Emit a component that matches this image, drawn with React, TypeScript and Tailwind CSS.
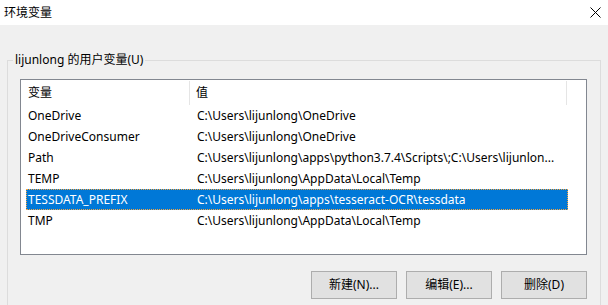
import React from 'react';

type EnvVar = { name: string; value: string };

const vars: EnvVar[] = [
  { name: 'OneDrive', value: 'C:\\Users\\lijunlong\\OneDrive' },
  { name: 'OneDriveConsumer', value: 'C:\\Users\\lijunlong\\OneDrive' },
  { name: 'Path', value: 'C:\\Users\\lijunlong\\apps\\python3.7.4\\Scripts\\;C:\\Users\\lijunlon...' },
  { name: 'TEMP', value: 'C:\\Users\\lijunlong\\AppData\\Local\\Temp' },
  { name: 'TESSDATA_PREFIX', value: 'C:\\Users\\lijunlong\\apps\\tesseract-OCR\\tessdata' },
  { name: 'TMP', value: 'C:\\Users\\lijunlong\\AppData\\Local\\Temp' },
];

const selected = 'TESSDATA_PREFIX';

function CloseIcon() {
  return (
    <svg width="11" height="11" viewBox="0 0 11 11" className="block">
      <path d="M0.5 0.5 L10.5 10.5 M10.5 0.5 L0.5 10.5" stroke="#000" strokeWidth="1" fill="none" />
    </svg>
  );
}

function WinButton({ label }: { label: string }) {
  return (
    <button
      type="button"
      className="w-[86px] h-[28px] border border-[#adadad] bg-[#e1e1e1] flex items-center justify-center text-black"
    >
      {label}
    </button>
  );
}

export default function App() {
  return (
    <div className="w-[608px] h-[305px] overflow-hidden flex flex-col bg-[#f0f0f0] text-[12px] text-black font-['Noto_Sans','Noto_Sans_CJK_SC',sans-serif]">
      {/* title bar */}
      <div className="h-[25px] bg-white flex items-center justify-between pl-[4px] pr-[7px] shrink-0">
        <span className="leading-[16px]">环境变量</span>
        <CloseIcon />
      </div>

      <div className="flex-1 px-[7px] pt-[27px]">
        <fieldset className="border border-[#dcdcdc] h-[300px] p-0 m-0 min-w-0">
          <legend className="ml-[5px] px-[2px] leading-[16px]">lijunlong 的用户变量(U)</legend>

          {/* list view */}
          <div className="ml-[12px] mt-[11px] w-[567px] h-[176px] border border-[#828790] bg-white">
            <div className="h-[25px] flex">
              <div className="w-[168px] pl-[7px] flex items-center">变量</div>
              <div className="w-px bg-[#e5e5e5] mt-[1px]" />
              <div className="w-[376px] pl-[6px] flex items-center">值</div>
              <div className="w-px bg-[#e5e5e5] mt-[1px]" />
            </div>
            {vars.map((v) => {
              const isSel = v.name === selected;
              return (
                <div
                  key={v.name}
                  className={
                    isSel
                      ? 'ml-[5px] w-[542px] h-[21px] flex items-center whitespace-nowrap bg-[#0078d7] text-white border border-dotted border-[#f7a540]'
                      : 'ml-[5px] w-[542px] h-[21px] flex items-center whitespace-nowrap border border-transparent'
                  }
                >
                  <div className="w-[163px] pl-[1px]">{v.name}</div>
                  <div className="flex-1 pl-[7px] overflow-hidden">{v.value}</div>
                </div>
              );
            })}
          </div>

          {/* buttons */}
          <div className="ml-[12px] mt-[16px] w-[567px] flex justify-end gap-[9px]">
            <WinButton label="新建(N)..." />
            <WinButton label="编辑(E)..." />
            <WinButton label="删除(D)" />
          </div>
        </fieldset>
      </div>
    </div>
  );
}
